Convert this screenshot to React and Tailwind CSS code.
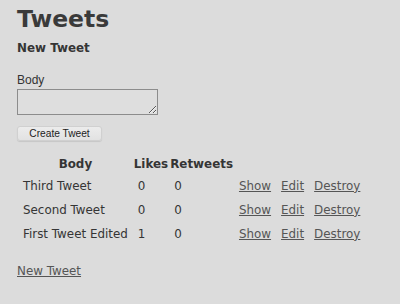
export default function App() {
  const rows = [
    { body: "Third Tweet", likes: 0, retweets: 0 },
    { body: "Second Tweet", likes: 0, retweets: 0 },
    { body: "First Tweet Edited", likes: 1, retweets: 0 },
  ];
  const verdana = "font-['DejaVu_Sans',sans-serif]";
  return (
    <div className={`w-[400px] h-[304px] overflow-hidden bg-[#dcdcdc] text-[#353535] pl-[17px] pt-[4.8px] ${verdana}`}>
      <h1 className="text-[23.5px] leading-[28px] font-bold text-[#3a3a3a]">Tweets</h1>
      <h2 className="mt-[7.4px] text-[11.9px] leading-[16px] font-bold">New Tweet</h2>
      <form className="font-['Liberation_Sans',sans-serif]">
        <label className="block mt-[17px] text-[12px] leading-[14px] text-[#333]">Body</label>
        <textarea className="block mt-[2px] w-[141px] h-[26px] border border-[#8c8c8c] bg-[#dedede] outline-none" />
        <button
          type="button"
          className="block mt-[11px] w-[85px] h-[15px] rounded-[3px] border border-[#d0d0d0] bg-gradient-to-b from-[#ececec] to-[#e2e2e2] text-[10.2px] leading-[12px] text-[#222] shadow-[0_1px_1px_rgba(0,0,0,0.1)]"
        >
          Create Tweet
        </button>
      </form>
      <table className="mt-[12.6px] border-separate border-spacing-[2px] text-[11.9px] leading-[16px]">
        <thead>
          <tr>
            <th className="pb-[4px] text-center font-bold">Body</th>
            <th className="pb-[4px] text-center font-bold">Likes</th>
            <th className="pb-[4px] text-center font-bold">Retweets</th>
            <th colSpan={3} className="pb-[4px]"></th>
          </tr>
        </thead>
        <tbody>
          {rows.map((r) => (
            <tr key={r.body}>
              <td className="px-[4px] pb-[6px] text-left">{r.body}</td>
              <td className="px-[4px] pb-[6px] text-left">{r.likes}</td>
              <td className="px-[4px] pb-[6px] text-left">{r.retweets}</td>
              <td className="px-[4px] pb-[6px]"><a href="#" className="underline text-[#555]">Show</a></td>
              <td className="px-[4px] pb-[6px]"><a href="#" className="underline text-[#555]">Edit</a></td>
              <td className="px-[4px] pb-[6px]"><a href="#" className="underline text-[#555]">Destroy</a></td>
            </tr>
          ))}
        </tbody>
      </table>
      <p className="mt-[13.7px] text-[11.9px] leading-[16px]">
        <a href="#" className="underline text-[#555]">New Tweet</a>
      </p>
    </div>
  );
}
